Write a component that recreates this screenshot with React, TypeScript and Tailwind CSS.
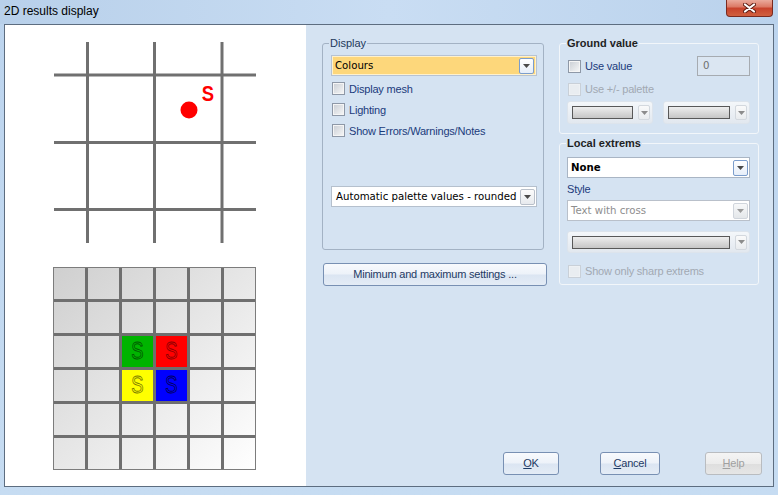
import React from "react";

const ui = "font-['Liberation_Sans',Arial,sans-serif]";
const tah = "font-['DejaVu_Sans',Verdana,sans-serif]";

function Arrow({ color = "#4a4a4a" }: { color?: string }) {
  return (
    <svg width="7" height="4" viewBox="0 0 7 4">
      <path d="M0 0h7L3.5 4z" fill={color} />
    </svg>
  );
}

function DropBtn({ blue, disabled }: { blue?: boolean; disabled?: boolean }) {
  const look = blue
    ? "border-[#7b9dcc] bg-gradient-to-b from-white to-[#e6eef9]"
    : disabled
    ? "border-[#d0d5dc] bg-gradient-to-b from-[#f7f8f9] to-[#e4e7ea]"
    : "border-[#b9c0ca] bg-gradient-to-b from-[#fbfbfb] to-[#e7eaee]";
  return (
    <span className={`flex h-[16px] w-[15px] shrink-0 items-center justify-center rounded-[2px] border ${look}`}>
      <Arrow color={disabled ? "#9a9a9a" : "#4a4a4a"} />
    </span>
  );
}

function Check({ label, disabled, className = "" }: { label: string; disabled?: boolean; className?: string }) {
  return (
    <div className={`flex items-center ${className}`}>
      <span
        className={`flex h-[13px] w-[13px] shrink-0 items-center justify-center border ${
          disabled ? "border-[#c9d0d8] bg-[#eef1f4]" : "border-[#8e98a7] bg-[#f5f5f5]"
        }`}
      >
        <span className={`h-[9px] w-[9px] ${disabled ? "bg-[#e9edf1]" : "bg-gradient-to-br from-[#cdd1d7] to-[#f3f4f5]"}`} />
      </span>
      <span
        className={`ml-[4px] ${ui} text-[11px] leading-[14px] tracking-[-0.2px] ${
          disabled ? "text-[#a2a9b2]" : "text-[#1b3b7c]"
        }`}
      >
        {label}
      </span>
    </div>
  );
}

function LineCombo({ className = "" }: { className?: string }) {
  return (
    <div
      className={`flex items-center rounded-[3px] border border-[#dde4ec] bg-gradient-to-b from-[#f4f7fa] to-[#e2e8ef] pl-[4px] pr-[2px] ${className}`}
    >
      <span className="h-[13px] flex-1 border border-[#585858] bg-gradient-to-b from-[#eeeeee] to-[#c6c6c6]" />
      <span className="ml-[5px] flex h-[15px] w-[12px] items-center justify-center rounded-[2px] border border-[#d3d8de] bg-gradient-to-b from-[#fafafa] to-[#e9ecef]">
        <Arrow color="#8c8c8c" />
      </span>
    </div>
  );
}

function Btn({ children, className = "", disabled }: { children: React.ReactNode; className?: string; disabled?: boolean }) {
  return (
    <button
      className={`flex h-[23px] items-center justify-center rounded-[3px] border ${ui} text-[11px] tracking-[-0.2px] ${
        disabled
          ? "border-[#b9bcc0] bg-[linear-gradient(to_bottom,#f4f4f4_0%,#ececec_50%,#dedede_51%,#e6e6e6_100%)] text-[#a0a0a0]"
          : "border-[#7890b3] bg-[linear-gradient(to_bottom,#f8fafd_0%,#edf2f9_48%,#dbe5f2_52%,#e4ecf6_100%)] text-[#1e3a64]"
      } ${className}`}
    >
      {children}
    </button>
  );
}

function TopDrawing() {
  return (
    <svg width="202" height="201" className="ml-[49px] mt-[17px] block">
      {[33.5, 100.5, 168].map((x) => (
        <line key={x} x1={x} y1={0} x2={x} y2={201} stroke="#707070" strokeWidth="3" />
      ))}
      {[33, 100.5, 167.5].map((y) => (
        <line key={y} x1={0} y1={y} x2={202} y2={y} stroke="#707070" strokeWidth="3" />
      ))}
      <circle cx="135" cy="68" r="8.5" fill="#ff0000" />
      <g transform="translate(154 59) scale(0.84 1)">
        <text x="0" y="0" textAnchor="middle" fontFamily="Liberation Sans, Arial, sans-serif" fontWeight="bold" fontSize="22" fill="#ff0000">
          S
        </text>
      </g>
    </svg>
  );
}

const cells = [
  { x: 69, y: 69, fill: "#00b400", ink: "#005a00" },
  { x: 103, y: 69, fill: "#ff0000", ink: "#8a0000" },
  { x: 69, y: 103, fill: "#ffff00", ink: "#7d7d00" },
  { x: 103, y: 103, fill: "#0000ff", ink: "#00005a" },
];

function GridDrawing() {
  return (
    <svg width="203" height="203" className="ml-[48px] mt-[24px] block">
      <defs>
        <linearGradient id="shade" x1="0" y1="0" x2="1" y2="1">
          <stop offset="0" stopColor="#cfcfcf" />
          <stop offset="1" stopColor="#ffffff" />
        </linearGradient>
      </defs>
      <rect x="0.5" y="0.5" width="202" height="202" fill="url(#shade)" stroke="#7c7c7c" />
      {cells.map((c) => (
        <g key={c.fill}>
          <rect x={c.x} y={c.y} width="31" height="31" fill={c.fill} />
          <g transform={`translate(${c.x + 15.5} ${c.y + 23}) scale(0.8 1)`}>
            <text x="0" y="0" textAnchor="middle" fontFamily="Liberation Sans, Arial, sans-serif" fontSize="23" fill="none" stroke={c.ink} strokeWidth="0.9">
              S
            </text>
          </g>
        </g>
      ))}
      {[0, 1, 2, 3, 4].map((i) => (
        <g key={i}>
          <line x1={33.5 + 34 * i} y1={1} x2={33.5 + 34 * i} y2={202} stroke="#6f6f6f" strokeWidth="3" />
          <line x1={1} y1={33.5 + 34 * i} x2={202} y2={33.5 + 34 * i} stroke="#6f6f6f" strokeWidth="3" />
        </g>
      ))}
    </svg>
  );
}

export default function App() {
  return (
    <div className="relative h-[495px] w-[778px] overflow-hidden bg-gradient-to-b from-[#bcd4ee] to-[#c6dcf2]">
      {/* title bar */}
      <div className="flex h-[24px] items-start bg-gradient-to-r from-[#b8d0ea] via-[#c9ddf3] to-[#bad2ec]">
        <span className={`pl-[4px] pt-[4px] ${ui} text-[12px] leading-[14px] text-black`}>2D results display</span>
        <span className="ml-auto mr-[5px] flex h-[17px] w-[47px] items-center justify-center rounded-b-[4px] border border-t-0 border-[#7a2a1f] bg-[linear-gradient(to_bottom,#eaaa9c_0%,#dc7a66_42%,#c8432c_52%,#d0603f_100%)]">
          <svg width="13" height="10" viewBox="0 0 13 10">
            <path d="M2 1.5L11 8.5M11 1.5L2 8.5" stroke="#5e1c12" strokeWidth="4" strokeLinecap="round" />
            <path d="M2 1.5L11 8.5M11 1.5L2 8.5" stroke="#ffffff" strokeWidth="2.2" strokeLinecap="round" />
          </svg>
        </span>
      </div>

      {/* client */}
      <div className="ml-[4px] flex h-[463px] w-[770px] border border-[#5d6d80]">
        <div className="w-[301px] bg-white">
          <TopDrawing />
          <GridDrawing />
        </div>

        <div className="flex flex-1 flex-col bg-[#d5e3f2] pl-[16px]">
          <div className="mt-[11px] flex items-start">
            {/* left column */}
            <div className="flex w-[225px] flex-col">
              <fieldset className="h-[214px] w-[222px] rounded-[3px] border border-[#a3b2c4] pl-[8px]">
                <legend className={`ml-[-2px] px-[1px] ${ui} text-[11px] leading-[14px] text-[#1e395b]`}>Display</legend>
                <div className="mt-[5px] flex h-[21px] w-[206px] items-center border border-[#b7c3d2] bg-[#fdd77b] pl-[3px] pr-[2px] shadow-[inset_0_0_0_1px_#fff1cc]">
                  <span className={`flex-1 ${tah} text-[10.2px] text-black`}>Colours</span>
                  <DropBtn blue />
                </div>
                <Check label="Display mesh" className="mt-[2px] h-[21px] pl-[1px]" />
                <Check label="Lighting" className="h-[21px] pl-[1px]" />
                <Check label="Show Errors/Warnings/Notes" className="h-[21px] pl-[1px]" />
                <div className="mt-[45px] flex h-[21px] w-[206px] items-center border border-[#b5c0cd] bg-white pl-[4px] pr-[1px]">
                  <span className={`flex-1 ${tah} text-[10.2px] text-black`}>Automatic palette values - rounded</span>
                  <DropBtn />
                </div>
              </fieldset>
              <Btn className="ml-[1px] mt-[13px] w-[224px]">Minimum and maximum settings ...</Btn>
            </div>

            {/* right column */}
            <div className="ml-[12px] flex w-[200px] flex-col">
              <fieldset className="h-[98px] rounded-[3px] border border-[#f2f6fa] pl-[7px] pr-[8px]">
                <legend className={`ml-[-1px] px-[1px] ${ui} text-[11px] font-bold leading-[14px] text-[#1f1f1f]`}>Ground value</legend>
                <div className="mt-[6px] flex h-[20px] items-center justify-between">
                  <Check label="Use value" className="pl-[1px]" />
                  <div className={`flex h-[20px] w-[53px] items-center border border-[#a6abb1] bg-[#dbe6f2] pl-[5px] ${tah} text-[10.2px] text-[#707070]`}>
                    0
                  </div>
                </div>
                <Check label="Use +/- palette" disabled className="mt-[3px] h-[20px] pl-[1px]" />
                <div className="mt-[2px] flex justify-between">
                  <LineCombo className="h-[23px] w-[86px]" />
                  <LineCombo className="h-[23px] w-[87px]" />
                </div>
              </fieldset>

              <fieldset className="mt-[2px] h-[149px] rounded-[3px] border border-[#f2f6fa] pl-[7px] pr-[8px]">
                <legend className={`ml-[-1px] px-[1px] ${ui} text-[11px] font-bold leading-[14px] text-[#1f1f1f]`}>Local extrems</legend>
                <div className="mt-[7px] flex h-[21px] items-center border border-[#a9b5c4] bg-white pl-[3px] pr-[1px]">
                  <span className={`flex-1 ${tah} text-[10.2px] font-bold text-black`}>None</span>
                  <DropBtn blue />
                </div>
                <div className={`flex h-[22px] items-center ${ui} text-[11px] tracking-[-0.2px] text-[#1b3b7c]`}>Style</div>
                <div className="flex h-[21px] items-center border border-[#b9c0ca] bg-white pl-[3px] pr-[1px]">
                  <span className={`flex-1 ${tah} text-[10.2px] text-[#8e8e8e]`}>Text with cross</span>
                  <DropBtn disabled />
                </div>
                <LineCombo className="mt-[10px] h-[22px]" />
                <Check label="Show only sharp extrems" disabled className="mt-[8px] h-[20px] pl-[1px]" />
              </fieldset>
            </div>
          </div>

          {/* dialog buttons */}
          <div className="mb-[11px] mt-auto flex justify-end pr-[11px]">
            <Btn className="w-[56px]">
              <span className="underline">O</span>K
            </Btn>
            <Btn className="ml-[41px] w-[60px]">
              <span className="underline">C</span>ancel
            </Btn>
            <Btn disabled className="ml-[45px] w-[57px]">
              <span className="underline">H</span>elp
            </Btn>
          </div>
        </div>
      </div>
    </div>
  );
}
